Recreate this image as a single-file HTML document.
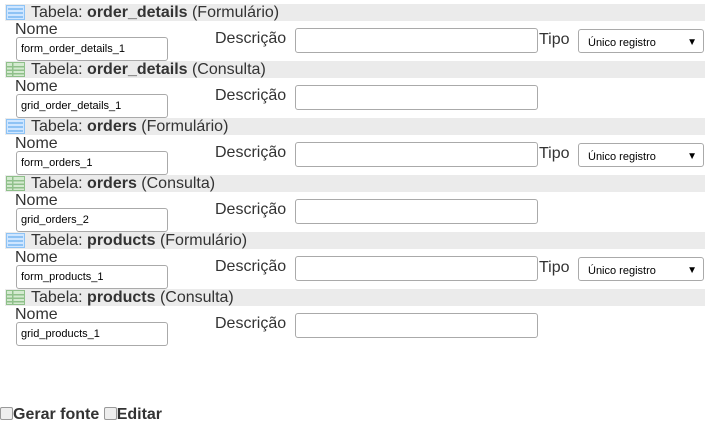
<html><head><style>
body{margin:0;background:#fff;font-family:"Liberation Sans",sans-serif;color:#333;width:711px;height:423px;overflow:hidden;position:relative}
.b{position:absolute;left:0;width:711px;height:57px}
.h{position:absolute;left:5px;top:0;width:700px;height:17px;background:#ebebeb;font-size:16px;line-height:17px}
.h span{position:absolute;left:26px;top:0;white-space:nowrap}
.ic{position:absolute;left:1px;top:1px;width:19px;height:15px}
.l{position:absolute;font-size:16px;line-height:18px}
.in{position:absolute;box-sizing:border-box;border:1px solid #aaa;border-radius:3px;background:#fff;font-size:11px;line-height:22px;padding-left:4px;color:#000}
.sel{line-height:26px}
.sel::after{content:"▼";position:absolute;right:6px;top:0;font-size:10px}
.cb{display:inline-block;width:13px;height:13px;border:1px solid #999;border-radius:2px;background:#eee;vertical-align:-1px;box-sizing:border-box}
</style></head><body>
<svg width="0" height="0" style="position:absolute"><defs>
<g id="f"><rect x="0.5" y="0.5" width="18" height="14" fill="#cfe6ff" stroke="#8ec3f5"/><rect x="2" y="3" width="15" height="2" fill="#8ec3f5"/><rect x="2" y="7" width="15" height="2" fill="#8ec3f5"/><rect x="2" y="11" width="15" height="2" fill="#8ec3f5"/></g>
<g id="g"><rect x="0.5" y="0.5" width="18" height="14" fill="#d4ead0" stroke="#8fc08a"/><rect x="1" y="4" width="17" height="1.5" fill="#8fc08a"/><rect x="1" y="7.5" width="17" height="1.5" fill="#8fc08a"/><rect x="1" y="11" width="17" height="1.5" fill="#8fc08a"/><rect x="6" y="1" width="1.5" height="13" fill="#8fc08a"/></g>
</defs></svg>

<div class="b" style="top:4px"><div class="h"><svg class="ic"><use href="#f"/></svg><span>Tabela: <b>order_details</b> (Formulário)</span></div>
<div class="l" style="left:15px;top:17px">Nome</div><div class="in" style="left:16px;top:33px;width:152px;height:24px">form_order_details_1</div>
<div class="l" style="left:215px;top:26px">Descrição</div><div class="in" style="left:295px;top:24px;width:243px;height:25px"></div>
<div class="l" style="left:539px;top:27px">Tipo</div><div class="in sel" style="left:578px;top:25px;width:126px;height:24px;padding-left:9px">Único registro</div></div>

<div class="b" style="top:61px"><div class="h"><svg class="ic"><use href="#g"/></svg><span>Tabela: <b>order_details</b> (Consulta)</span></div>
<div class="l" style="left:15px;top:17px">Nome</div><div class="in" style="left:16px;top:33px;width:152px;height:24px">grid_order_details_1</div>
<div class="l" style="left:215px;top:26px">Descrição</div><div class="in" style="left:295px;top:24px;width:243px;height:25px"></div></div>

<div class="b" style="top:118px"><div class="h"><svg class="ic"><use href="#f"/></svg><span>Tabela: <b>orders</b> (Formulário)</span></div>
<div class="l" style="left:15px;top:17px">Nome</div><div class="in" style="left:16px;top:33px;width:152px;height:24px">form_orders_1</div>
<div class="l" style="left:215px;top:26px">Descrição</div><div class="in" style="left:295px;top:24px;width:243px;height:25px"></div>
<div class="l" style="left:539px;top:27px">Tipo</div><div class="in sel" style="left:578px;top:25px;width:126px;height:24px;padding-left:9px">Único registro</div></div>

<div class="b" style="top:175px"><div class="h"><svg class="ic"><use href="#g"/></svg><span>Tabela: <b>orders</b> (Consulta)</span></div>
<div class="l" style="left:15px;top:17px">Nome</div><div class="in" style="left:16px;top:33px;width:152px;height:24px">grid_orders_2</div>
<div class="l" style="left:215px;top:26px">Descrição</div><div class="in" style="left:295px;top:24px;width:243px;height:25px"></div></div>

<div class="b" style="top:232px"><div class="h"><svg class="ic"><use href="#f"/></svg><span>Tabela: <b>products</b> (Formulário)</span></div>
<div class="l" style="left:15px;top:17px">Nome</div><div class="in" style="left:16px;top:33px;width:152px;height:24px">form_products_1</div>
<div class="l" style="left:215px;top:26px">Descrição</div><div class="in" style="left:295px;top:24px;width:243px;height:25px"></div>
<div class="l" style="left:539px;top:27px">Tipo</div><div class="in sel" style="left:578px;top:25px;width:126px;height:24px;padding-left:9px">Único registro</div></div>

<div class="b" style="top:289px"><div class="h"><svg class="ic"><use href="#g"/></svg><span>Tabela: <b>products</b> (Consulta)</span></div>
<div class="l" style="left:15px;top:17px">Nome</div><div class="in" style="left:16px;top:33px;width:152px;height:24px">grid_products_1</div>
<div class="l" style="left:215px;top:26px">Descrição</div><div class="in" style="left:295px;top:24px;width:243px;height:25px"></div></div>

<div class="l" style="left:0;top:406px;font-weight:bold;white-space:nowrap"><span class="cb"></span>Gerar fonte <span class="cb"></span>Editar</div>
</body></html>
